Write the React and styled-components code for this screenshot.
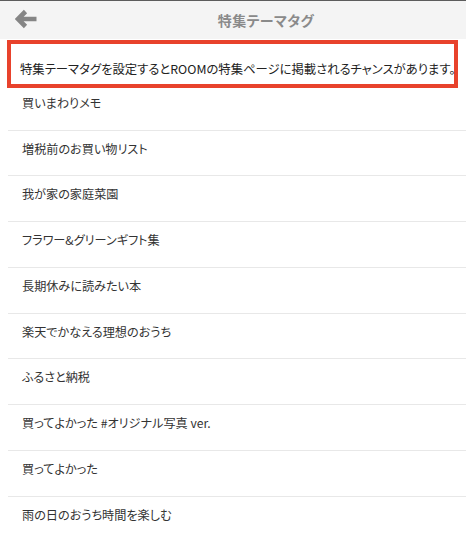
import React from "react";
import styled, { createGlobalStyle } from "styled-components";

const Global = createGlobalStyle`
  html, body { margin: 0; padding: 0; background: #fff; }
  body {
    font-family: "Noto Sans CJK JP", "Noto Sans", sans-serif;
    -webkit-font-smoothing: antialiased;
  }
`;

const Page = styled.div`
  width: 466px;
  height: 540px;
  overflow: hidden;
  background: #fff;
  border-top: 1px solid #5c5c5c;
  box-sizing: border-box;
`;

const Header = styled.header`
  position: relative;
  height: 38px;
  background: #f4f4f4;
  display: flex;
  align-items: center;
  justify-content: center;
  padding-left: 66px;
`;

const BackButton = styled.button`
  position: absolute;
  left: 14px;
  top: 7px;
  width: 24px;
  height: 22px;
  padding: 0;
  border: none;
  background: transparent;
  display: flex;
  align-items: center;
  justify-content: center;
`;

const Title = styled.h1`
  margin: 0;
  font-size: 14px;
  font-weight: 700;
  color: #8a8a8a;
  font-feature-settings: "palt";
  letter-spacing: 0.4px;
`;

const Notice = styled.div`
  margin: 1px 8px 0 7px;
  border: 4px solid #e8422c;
  height: 48px;
  box-sizing: border-box;
  display: flex;
  align-items: flex-end;
  padding: 0 0 7px 9px;
  font-size: 12.35px;
  line-height: 16px;
  color: #222;
  font-feature-settings: "palt";
  white-space: nowrap;
`;

const List = styled.ul`
  list-style: none;
  margin: 0;
  padding: 0;
`;

const Row = styled.li`
  margin-left: 8px;
  padding: ${p => (p.$first ? "6.75px" : "10px")} 0 18.75px 14px;
  font-size: 12.15px;
  line-height: 16px;
  color: #333;
  font-feature-settings: "palt";
  border-bottom: 1px solid #e8e8e8;
  white-space: nowrap;
`;

const Arrow = () => (
  <svg width="23" height="20" viewBox="0 0 23 20">
    <path
      d="M10.5 2.5 L3 10 L10.5 17.5 M3.5 10 H21.5"
      fill="none"
      stroke="#858585"
      strokeWidth="4.6"
      strokeLinecap="butt"
      strokeLinejoin="miter"
    />
  </svg>
);

const tags = [
  "買いまわりメモ",
  "増税前のお買い物リスト",
  "我が家の家庭菜園",
  "フラワー&グリーンギフト集",
  "長期休みに読みたい本",
  "楽天でかなえる理想のおうち",
  "ふるさと納税",
  "買ってよかった #オリジナル写真 ver.",
  "買ってよかった",
  "雨の日のおうち時間を楽しむ",
];

export default function App() {
  return (
    <>
      <Global />
      <Page>
        <Header>
          <BackButton aria-label="戻る">
            <Arrow />
          </BackButton>
          <Title>特集テーマタグ</Title>
        </Header>
        <Notice>特集テーマタグを設定するとROOMの特集ページに掲載されるチャンスがあります。</Notice>
        <List>
          {tags.map((t, i) => (
            <Row key={t} $first={i === 0}>
              {t}
            </Row>
          ))}
        </List>
      </Page>
    </>
  );
}
